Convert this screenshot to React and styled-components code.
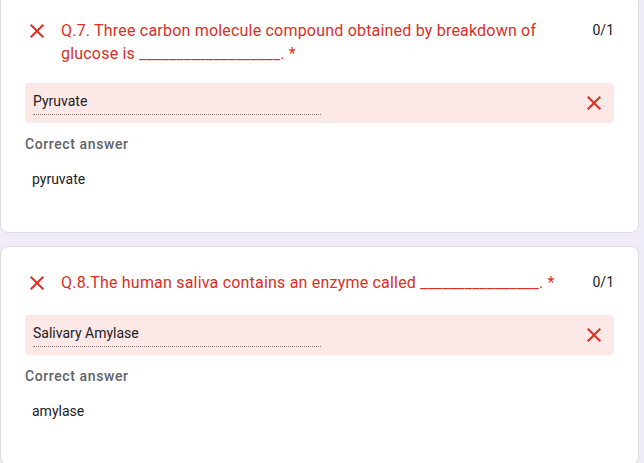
import React from "react";
import styled, { createGlobalStyle } from "styled-components";

const GlobalStyle = createGlobalStyle`
  html, body {
    margin: 0;
    padding: 0;
    background: #f0ebf8;
  }
  body {
    font-family: Roboto, "Liberation Sans", Arial, sans-serif;
    overflow: hidden;
  }
`;

const Page = styled.div`
  min-height: 100vh;
  padding: 0 5px 0 0;
  display: flex;
  flex-direction: column;
  gap: 13px;
  background: #f0ebf8;
`;

const Card = styled.div`
  background: #fff;
  border: 1px solid #dadce0;
  border-radius: 8px;
  padding: 24px;
  margin-top: ${(props) => (props.$first ? "-6px" : "0")};
`;

const Header = styled.div`
  display: flex;
  align-items: flex-start;
  min-height: 26px;
`;

const IconBox = styled.span`
  flex: 0 0 24px;
  width: 24px;
  height: 24px;
  display: flex;
  align-items: center;
  justify-content: center;
  svg {
    display: block;
  }
`;

const Title = styled.div`
  flex: 1;
  margin-left: 12px;
  padding-right: 16px;
  font-family: Roboto, "Liberation Sans", sans-serif;
  font-size: 16px;
  line-height: 23px;
  letter-spacing: 0.2px;
  color: #d93025;
`;

const Points = styled.div`
  font-size: 14px;
  line-height: 23px;
  color: #202124;
`;

const AnswerBox = styled.div`
  margin-top: 18px;
  height: 40px;
  box-sizing: border-box;
  background: #fce8e6;
  border-radius: 4px;
  padding: 0 8px;
  display: flex;
  align-items: flex-start;
  justify-content: space-between;
`;

const Field = styled.div`
  width: 288px;
  padding-top: 8px;
  padding-bottom: 3px;
  font-size: 14px;
  line-height: 20px;
  color: #202124;
  border-bottom: 1px dotted rgba(0, 0, 0, 0.45);
`;

const ResultIcon = styled(IconBox)`
  margin-top: 8px;
`;

const Label = styled.div`
  margin-top: 11px;
  font-size: 14px;
  line-height: 20px;
  font-weight: 500;
  letter-spacing: 0.6px;
  color: #5f6368;
`;

const Value = styled.div`
  margin: 15px 0 19px 7px;
  font-size: 14px;
  line-height: 20px;
  color: #202124;
`;

const CloseIcon = () => (
  <svg width="24" height="24" viewBox="0 0 24 24" fill="#d93025">
    <path d="M19 6.41L17.59 5 12 10.59 6.41 5 5 6.41 10.59 12 5 17.59 6.41 19 12 13.41 17.59 19 19 17.59 13.41 12z" />
  </svg>
);

const questions = [
  {
    title: "Q.7. Three carbon molecule compound obtained by breakdown of glucose is ___________________. *",
    answer: "Pyruvate",
    correct: "pyruvate",
  },
  {
    title: "Q.8.The human saliva contains an enzyme called ________________. *",
    answer: "Salivary Amylase",
    correct: "amylase",
  },
];

const App = () => {
  return (
    <>
      <GlobalStyle />
      <Page>
        {questions.map((q, i) => (
          <Card key={i} $first={i === 0}>
            <Header>
              <IconBox>
                <CloseIcon />
              </IconBox>
              <Title>{q.title}</Title>
              <Points>0/1</Points>
            </Header>
            <AnswerBox>
              <Field>{q.answer}</Field>
              <ResultIcon>
                <CloseIcon />
              </ResultIcon>
            </AnswerBox>
            <Label>Correct answer</Label>
            <Value>{q.correct}</Value>
          </Card>
        ))}
      </Page>
    </>
  );
};

export default App;
